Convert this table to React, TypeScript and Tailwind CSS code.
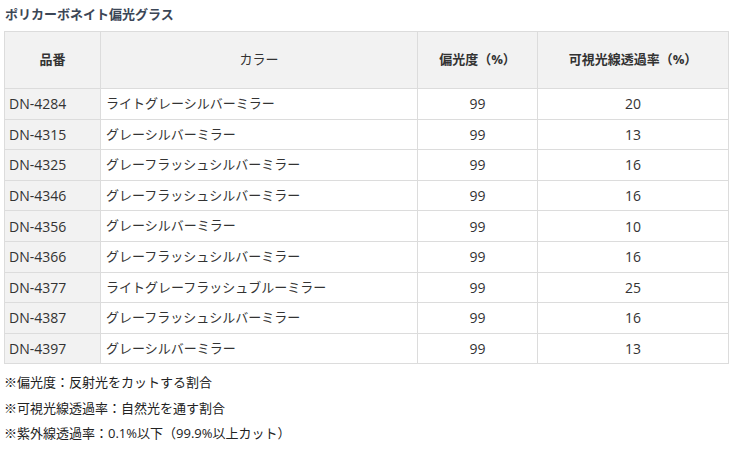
import React from "react";

interface Lens {
  code: string;
  color: string;
  polar: number;
  visible: number;
}

const lenses: Lens[] = [
  { code: "DN-4284", color: "ライトグレーシルバーミラー", polar: 99, visible: 20 },
  { code: "DN-4315", color: "グレーシルバーミラー", polar: 99, visible: 13 },
  { code: "DN-4325", color: "グレーフラッシュシルバーミラー", polar: 99, visible: 16 },
  { code: "DN-4346", color: "グレーフラッシュシルバーミラー", polar: 99, visible: 16 },
  { code: "DN-4356", color: "グレーシルバーミラー", polar: 99, visible: 10 },
  { code: "DN-4366", color: "グレーフラッシュシルバーミラー", polar: 99, visible: 16 },
  { code: "DN-4377", color: "ライトグレーフラッシュブルーミラー", polar: 99, visible: 25 },
  { code: "DN-4387", color: "グレーフラッシュシルバーミラー", polar: 99, visible: 16 },
  { code: "DN-4397", color: "グレーシルバーミラー", polar: 99, visible: 13 },
];

const notes = [
  "※偏光度：反射光をカットする割合",
  "※可視光線透過率：自然光を通す割合",
  "※紫外線透過率：0.1%以下（99.9%以上カット）",
];

export default function App() {
  return (
    <div className="w-[737px] h-[449px] bg-white pl-[4px] pt-[5px] text-[13px] text-[#333] font-['Open_Sans','Noto_Sans_CJK_JP',sans-serif]">
      {/* Title */}
      <h2 className="h-[26px] leading-[18px] pl-[1px] font-bold text-[#3b4656]">ポリカーボネイト偏光グラス</h2>

      {/* Spec table */}
      <table className="w-[725px] border-collapse table-fixed">
        <colgroup>
          <col className="w-[96px]" />
          <col className="w-[317px]" />
          <col className="w-[120px]" />
          <col className="w-[191px]" />
        </colgroup>
        <thead>
          <tr className="h-[57px] bg-[#f2f2f2]">
            <th className="border border-[#dcdcdc] font-bold text-center">品番</th>
            <th className="border border-[#dcdcdc] font-normal text-center">カラー</th>
            <th className="border border-[#dcdcdc] font-bold text-center">偏光度（%）</th>
            <th className="border border-[#dcdcdc] font-bold text-center">可視光線透過率（%）</th>
          </tr>
        </thead>
        <tbody>
          {lenses.map((l) => (
            <tr key={l.code} className="h-[30.6px]">
              <td className="border border-[#dcdcdc] bg-[#f2f2f2] px-[4px] text-[14px]">{l.code}</td>
              <td className="border border-[#dcdcdc] px-[5px]">{l.color}</td>
              <td className="border border-[#dcdcdc] text-center text-[14px]">{l.polar}</td>
              <td className="border border-[#dcdcdc] text-center text-[14px]">{l.visible}</td>
            </tr>
          ))}
        </tbody>
      </table>

      {/* Notes */}
      <div className="pt-[6px] flex flex-col">
        {notes.map((n) => (
          <p key={n} className="h-[25.5px] leading-[25px] text-[#222]">{n}</p>
        ))}
      </div>
    </div>
  );
}
